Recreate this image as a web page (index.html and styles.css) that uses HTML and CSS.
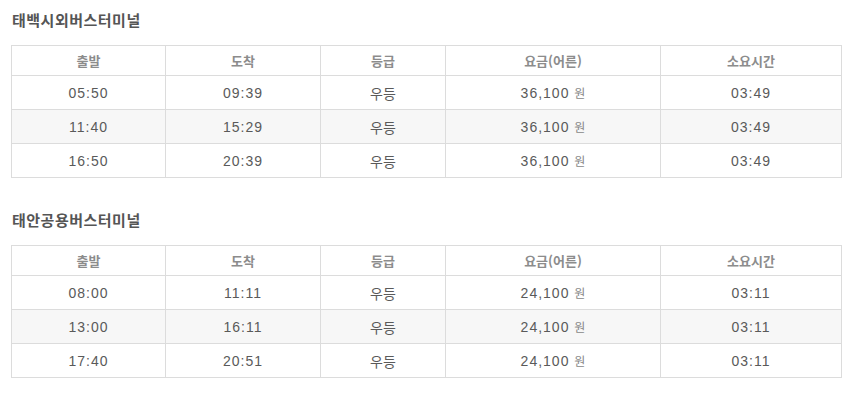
FILE: index.html
```html
<!DOCTYPE html>
<html lang="ko">
<head>
<meta charset="utf-8">
<link rel="stylesheet" href="styles.css">
</head>
<body>
<div class="page">
  <section class="section">
    <h2 class="title">태백시외버스터미널</h2>
    <table class="tbl">
      <colgroup><col class="c1"><col class="c2"><col class="c3"><col class="c4"><col class="c5"></colgroup>
      <thead><tr><th>출발</th><th>도착</th><th>등급</th><th>요금(어른)</th><th>소요시간</th></tr></thead>
      <tbody>
        <tr><td>05:50</td><td>09:39</td><td class="ko">우등</td><td>36,100 <span class="won">원</span></td><td>03:49</td></tr>
        <tr class="alt"><td>11:40</td><td>15:29</td><td class="ko">우등</td><td>36,100 <span class="won">원</span></td><td>03:49</td></tr>
        <tr><td>16:50</td><td>20:39</td><td class="ko">우등</td><td>36,100 <span class="won">원</span></td><td>03:49</td></tr>
      </tbody>
    </table>
  </section>
  <section class="section">
    <h2 class="title">태안공용버스터미널</h2>
    <table class="tbl">
      <colgroup><col class="c1"><col class="c2"><col class="c3"><col class="c4"><col class="c5"></colgroup>
      <thead><tr><th>출발</th><th>도착</th><th>등급</th><th>요금(어른)</th><th>소요시간</th></tr></thead>
      <tbody>
        <tr><td>08:00</td><td>11:11</td><td class="ko">우등</td><td>24,100 <span class="won">원</span></td><td>03:11</td></tr>
        <tr class="alt"><td>13:00</td><td>16:11</td><td class="ko">우등</td><td>24,100 <span class="won">원</span></td><td>03:11</td></tr>
        <tr><td>17:40</td><td>20:51</td><td class="ko">우등</td><td>24,100 <span class="won">원</span></td><td>03:11</td></tr>
      </tbody>
    </table>
  </section>
</div>
</body>
</html>
```

FILE: styles.css
```css
html, body {
  margin: 0;
  padding: 0;
  background: #fff;
}
body {
  font-family: "Noto Sans CJK KR", "Noto Sans", sans-serif;
  color: #555;
}
.page {
  padding: 10px 0 0 11px;
  width: 830px;
}
.section + .section {
  margin-top: 32px;
}
.title {
  margin: 0 0 15px 1px;
  font-size: 15px;
  line-height: 20px;
  font-weight: bold;
  color: #555;
  letter-spacing: 0.5px;
}
.tbl {
  width: 830px;
  border-collapse: collapse;
  table-layout: fixed;
}
.c1 { width: 154px; }
.c2 { width: 155px; }
.c3 { width: 125px; }
.c4 { width: 215px; }
.c5 { width: 181px; }
.tbl th, .tbl td {
  border: 1px solid #dcdcdc;
  text-align: center;
  padding: 0;
}
.tbl th {
  height: 29px;
  font-size: 13px;
  font-weight: bold;
  color: #8c8c8c;
}
.tbl td {
  height: 33px;
  font-family: "Liberation Sans", "Noto Sans CJK KR", sans-serif;
  font-size: 14px;
  letter-spacing: 1px;
  color: #5a5a5a;
}
.tbl td.ko {
  font-family: "Noto Sans CJK KR", sans-serif;
  letter-spacing: 0;
}
.won {
  font-family: "Noto Sans CJK KR", sans-serif;
  font-size: 12px;
  color: #888;
  letter-spacing: 0;
}
.tbl tr.alt td {
  background: #f7f7f7;
}
```
